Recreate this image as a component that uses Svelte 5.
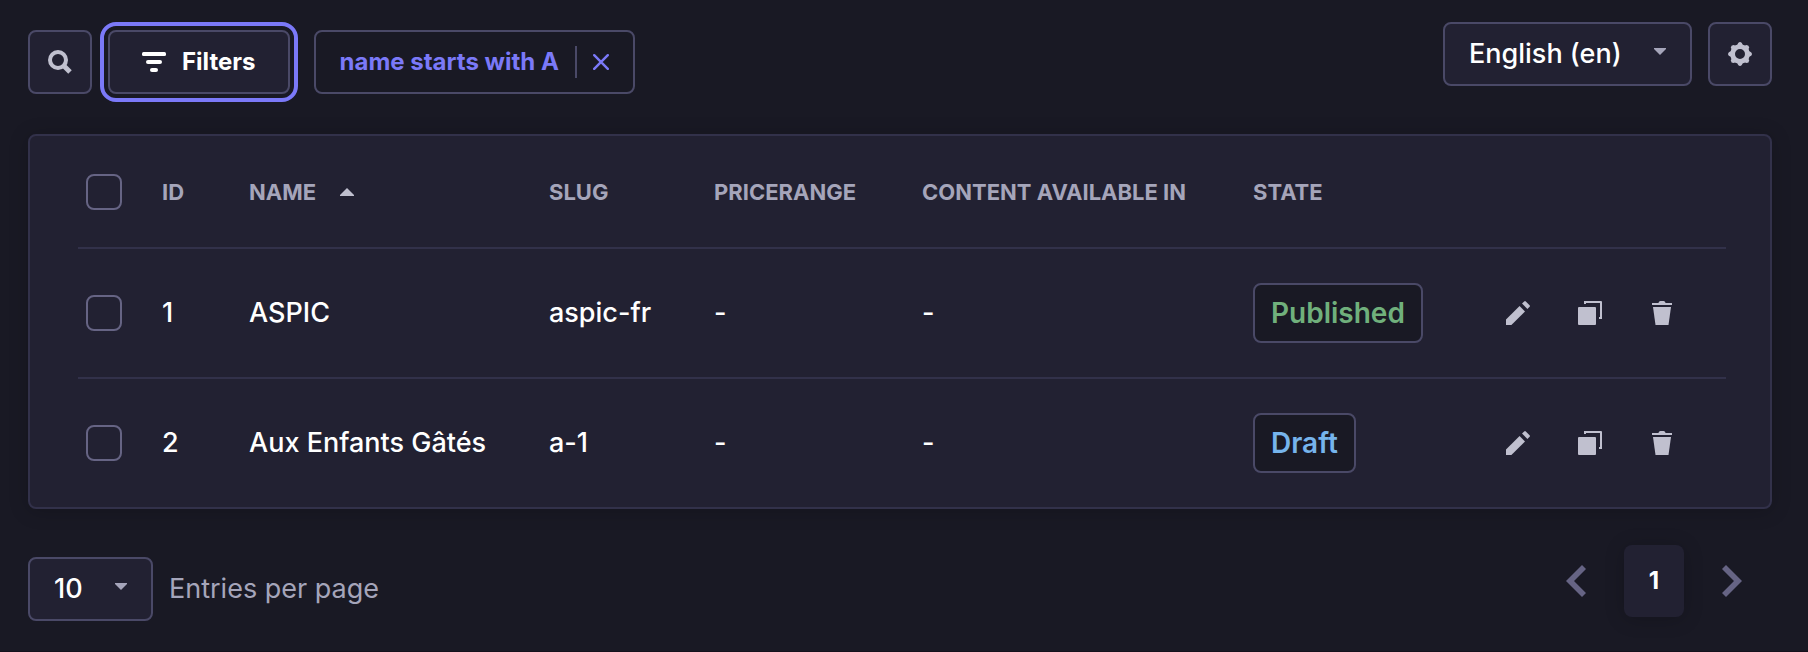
<script>
  const columns = ['Slug', 'Pricerange', 'Content available in', 'State'];
  const rows = [
    { id: 1, name: 'ASPIC', slug: 'aspic-fr', price: '-', locales: '-', state: 'Published' },
    { id: 2, name: 'Aux Enfants Gâtés', slug: 'a-1', price: '-', locales: '-', state: 'Draft' }
  ];
  let selected = $state([false, false]);
  let locale = $state('en');
  let pageSize = $state('10');
</script>

<main>
  <header class="toolbar">
    <div class="group filters">
      <button class="box square" aria-label="Search">
        <svg width="24" height="24" viewBox="0 0 24 24" fill="none" stroke="currentColor">
          <circle cx="10" cy="10" r="8" stroke-width="4" />
          <path d="M15.5 15.5 22 22" stroke-width="5" />
        </svg>
      </button>
      <button class="box filter-button">
        <svg width="24" height="24" viewBox="0 0 24 24" fill="currentColor">
          <rect x="0" y="2" width="24" height="4" rx="1.5" />
          <rect x="4" y="10" width="16" height="4" rx="2" />
          <rect x="8" y="18" width="8" height="4" rx="2" />
        </svg>
        Filters
      </button>
      <button class="box tag">
        <span>name starts with A</span>
        <span class="rule"></span>
        <svg width="16" height="16" viewBox="0 0 16 16" fill="none" stroke="currentColor" stroke-width="2.4" stroke-linecap="round">
          <path d="M1.2 1.2 14.8 14.8M14.8 1.2 1.2 14.8" />
        </svg>
      </button>
    </div>
    <div class="group">
      <div class="select">
        <select class="box" aria-label="Locale" bind:value={locale}>
          <option value="en">English (en)</option>
        </select>
        {@render caret()}
      </div>
      <button class="box square" aria-label="Configure the view">
        <svg width="24" height="24" viewBox="0 0 24 24">
          <g fill="currentColor">
            {#each [0, 45, 90, 135, 180, 225, 270, 315] as angle}
              <path d="M8.6 4 10.2 0.9Q12 -0.8 13.8 0.9L15.4 4Z" transform="rotate({angle} 12 12)" />
            {/each}
          </g>
          <circle cx="12" cy="12" r="7.4" fill="none" stroke="currentColor" stroke-width="4.8" />
        </svg>
      </button>
    </div>
  </header>

  <section class="card">
    <table>
      <colgroup>
        <col class="c-check" /><col class="c-id" /><col class="c-name" /><col class="c-slug" />
        <col class="c-price" /><col class="c-content" /><col class="c-state" /><col />
      </colgroup>
      <thead>
        <tr>
          <th><input type="checkbox" aria-label="Select all entries" /></th>
          <th>ID</th>
          <th>
            <button class="sort">
              NAME
              <svg width="14" height="8" viewBox="0 0 14 8" fill="currentColor"><path d="M7 0 14 7V8H0V7Z" /></svg>
            </button>
          </th>
          {#each columns as column}
            <th>{column.toUpperCase()}</th>
          {/each}
          <th aria-label="Actions"></th>
        </tr>
      </thead>
      <tbody>
        {#each rows as row, i}
          <tr>
            <td><input type="checkbox" aria-label="Select {row.name}" bind:checked={selected[i]} /></td>
            <td>{row.id}</td>
            <td>{row.name}</td>
            <td>{row.slug}</td>
            <td>{row.price}</td>
            <td>{row.locales}</td>
            <td><span class="badge" class:published={row.state === 'Published'}>{row.state}</span></td>
            <td>
              <div class="actions">
                <button aria-label="Edit {row.name}">
                  <svg width="24" height="24" viewBox="0 0 24 24" fill="currentColor">
                    <path d="M0 18.6 13.6 5 19 10.4 5.4 24H0Z" />
                    <path d="M16 2.6 18.2.4Q19 -.2 19.8.4L23.6 4.2Q24.3 5 23.6 5.8L21.4 8Z" />
                  </svg>
                </button>
                <button aria-label="Duplicate {row.name}">
                  <svg width="24" height="24" viewBox="0 0 24 24" fill="currentColor">
                    <rect x="0" y="6" width="18" height="18" rx="1" />
                    <path d="M6 0H23Q24 0 24 1V18H21V16H22V2H8V3H6Z" />
                  </svg>
                </button>
                <button aria-label="Delete {row.name}">
                  <svg width="24" height="24" viewBox="0 0 24 24" fill="currentColor">
                    <path d="M2 2H8.4Q9 0 10.4 0H13.6Q15 0 15.6 2H22V4H2Z" />
                    <path d="M3 6H21L18.5 24H5.5Z" />
                  </svg>
                </button>
              </div>
            </td>
          </tr>
        {/each}
      </tbody>
    </table>
  </section>

  <footer>
    <div class="group page-size">
      <div class="select">
        <select id="page-size" class="box" bind:value={pageSize}>
          <option>10</option>
        </select>
        {@render caret()}
      </div>
      <label for="page-size">Entries per page</label>
    </div>
    <nav aria-label="Pagination">
      <button aria-label="Previous page">
        <svg width="20" height="32" viewBox="0 0 20 32" fill="currentColor"><path d="M16 0 20 4 8 16 20 28 16 32 0 16Z" /></svg>
      </button>
      <button class="current" aria-current="page">1</button>
      <button aria-label="Next page">
        <svg width="20" height="32" viewBox="0 0 20 32" fill="currentColor"><path d="M4 0 0 4 12 16 0 28 4 32 20 16Z" /></svg>
      </button>
    </nav>
  </footer>
</main>

{#snippet caret()}
  <svg class="caret" width="12" height="8" viewBox="0 0 12 8" fill="currentColor"><path d="M0 0H12V1L6 7 0 1Z" /></svg>
{/snippet}

<style>
  :global(body) {
    margin: 0;
    background: #191924;
  }

  main {
    padding: 22px 36px 30px 28px;
    border-bottom: 1px solid #15111c;
    color: #fff;
    font: 500 27px/40px Inter, sans-serif;
  }

  svg {
    display: block;
    flex: none;
  }

  button {
    display: flex;
    align-items: center;
    justify-content: center;
    padding: 0;
    border: 0;
    background: none;
    color: #c0c0cf;
    font: inherit;
    cursor: pointer;
  }

  .toolbar,
  footer {
    display: flex;
    justify-content: space-between;
    align-items: flex-start;
  }

  .group {
    display: flex;
    align-items: center;
    gap: 16px;
  }

  .filters {
    padding-top: 8px;
  }

  .box {
    box-sizing: border-box;
    height: 64px;
    border: 2px solid #4a4967;
    border-radius: 8px;
    background: #222132;
  }

  .square {
    width: 64px;
  }

  .filter-button {
    gap: 16px;
    padding: 0 32px;
    color: #fff;
    font-size: 24px;
    font-weight: 700;
    outline: 4px solid #7b79f8;
    outline-offset: 4px;
  }

  .tag {
    gap: 16px;
    margin-left: 8px;
    padding: 0 24px;
    background: #191924;
    color: #7b79f8;
    font-size: 24px;
    font-weight: 700;
  }

  .rule {
    width: 2px;
    height: 32px;
    background: #4a4967;
  }

  .select {
    display: grid;
    align-items: center;
  }

  .select > :global(*) {
    grid-area: 1 / 1;
  }

  select {
    appearance: none;
    padding: 0 68px 0 24px;
    color: #fff;
    font: inherit;
  }

  .caret {
    justify-self: end;
    margin: 0 26px 4px 0;
    color: #a5a5ba;
    pointer-events: none;
  }

  .card {
    margin-top: 40px;
    padding: 0 44px 0 48px;
    border: 2px solid #32314a;
    border-radius: 8px;
    background: #222132;
    box-shadow: 0 2px 20px rgb(3 3 5 / 20%);
  }

  table {
    width: 100%;
    table-layout: fixed;
    border-collapse: separate;
    border-spacing: 0;
  }

  .c-check { width: 76px; }
  .c-id { width: 87px; }
  .c-name { width: 300px; }
  .c-slug { width: 165px; }
  .c-price { width: 208px; }
  .c-content { width: 331px; }
  .c-state { width: 192px; }

  th,
  td {
    padding: 0 8px;
    text-align: left;
    white-space: nowrap;
  }

  th {
    height: 111px;
    color: #a5a5ba;
    font-size: 22px;
    font-weight: 700;
  }

  td {
    height: 128px;
    border-top: 2px solid #32314a;
  }

  input {
    display: block;
    appearance: none;
    box-sizing: border-box;
    width: 36px;
    height: 36px;
    margin: 0;
    border: 2px solid #666484;
    border-radius: 8px;
  }

  input:checked {
    background: #7b79f8;
  }

  .sort {
    gap: 24px;
    color: #a5a5ba;
    font-weight: 700;
  }

  .sort svg {
    color: #c0c0cf;
  }

  .badge {
    display: inline-block;
    box-sizing: border-box;
    height: 60px;
    padding: 8px 16px;
    border: 2px solid #4a4967;
    border-radius: 8px;
    background: #191924;
    color: #76b4ec;
    font-size: 28px;
    font-weight: 600;
    vertical-align: middle;
  }

  .published {
    color: #70b07c;
  }

  .actions {
    display: flex;
    justify-content: flex-end;
    gap: 8px;
    padding-right: 24px;
  }

  .actions button {
    width: 64px;
    height: 64px;
  }

  footer {
    margin-top: 36px;
  }

  .page-size {
    padding-top: 12px;
  }

  label {
    color: #a5a5ba;
    font-weight: 400;
  }

  nav {
    display: flex;
    gap: 8px;
  }

  nav button {
    width: 80px;
    height: 72px;
    border-radius: 8px;
    color: #666484;
  }

  nav .current {
    width: 60px;
    background: #222132;
    box-shadow: 0 2px 20px rgb(3 3 5 / 20%);
    color: #fff;
    font-size: 24px;
    font-weight: 700;
  }
</style>
